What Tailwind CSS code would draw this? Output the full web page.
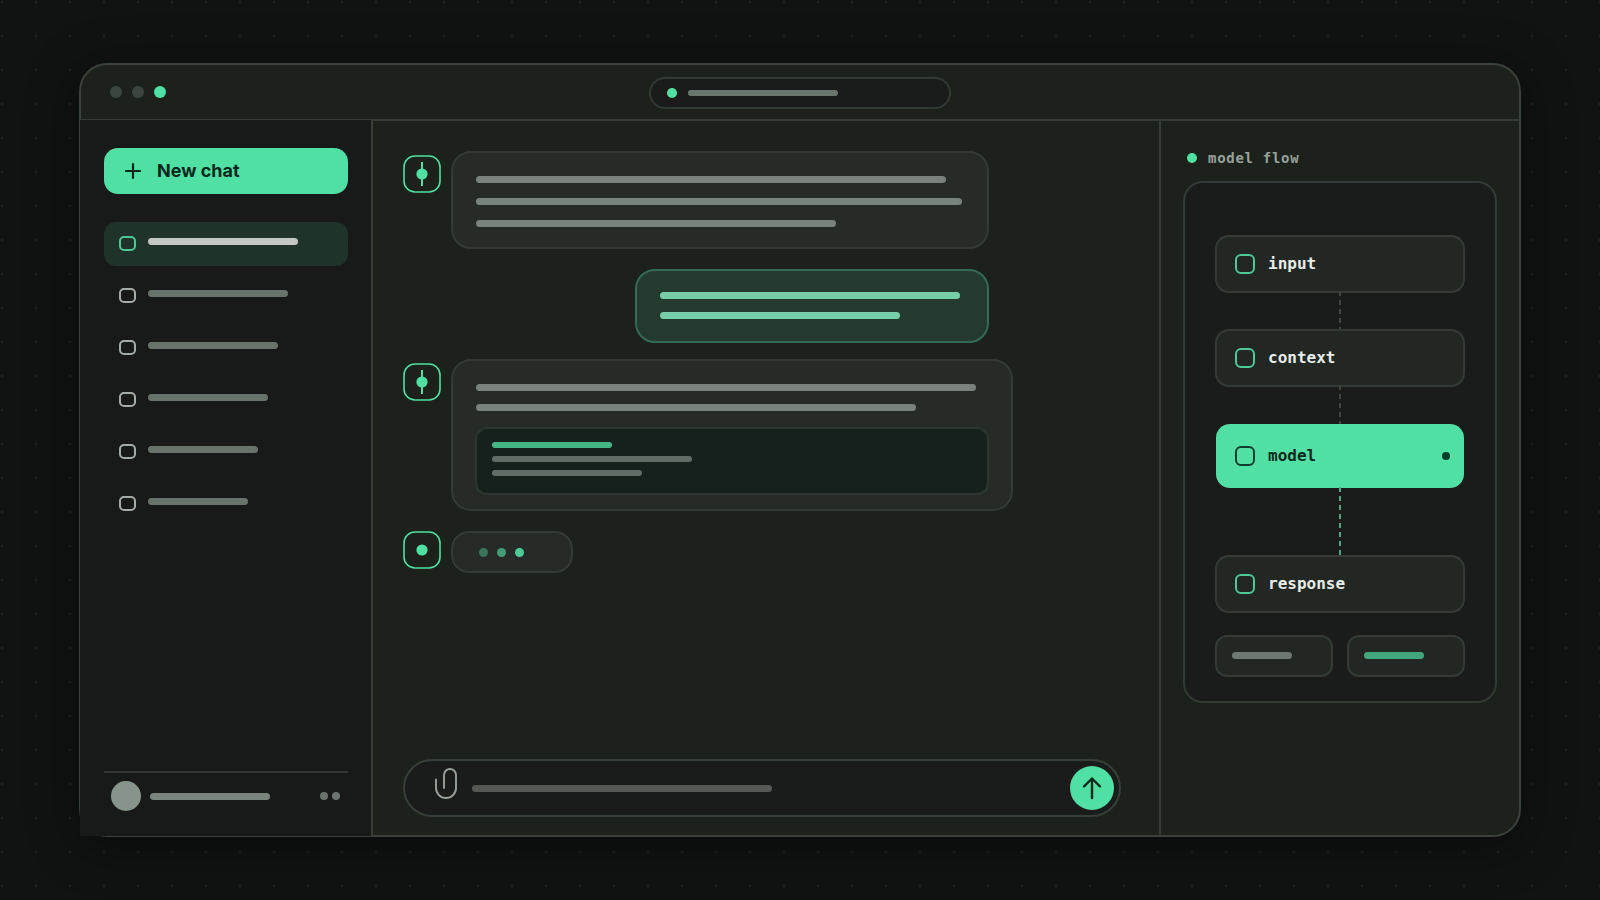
<!DOCTYPE html>
<html lang="en">
<head>
    <meta charset="UTF-8">
    <meta name="viewport" content="width=device-width, initial-scale=1.0">
    <title>Chat</title>
    <script src="https://cdn.jsdelivr.net/npm/@tailwindcss/browser@4"></script>
</head>
<body class="bg-[#111312] bg-[radial-gradient(circle_at_2px_2px,#1d211e_1px,transparent_2px)] bg-size-[34px_34px] font-['Inter',sans-serif]">
    <div class="min-h-screen flex px-[79px] py-[63px]">
        <div class="flex-1 flex flex-col bg-[#1d211c] border-2 border-[#3a413c] rounded-[28px] shadow-[0_8px_48px_4px_rgba(0,0,0,0.4)]">

            <!-- Title bar -->
            <header class="h-14 shrink-0 grid grid-cols-[1fr_302px_1fr] items-center pt-0.5 border-b-2 border-[#363d37]">
                <div class="flex gap-2.5 pl-[29px] pb-0.5">
                    <span class="size-3 rounded-full bg-[#3b4641]"></span>
                    <span class="size-3 rounded-full bg-[#3b4641]"></span>
                    <span class="size-3 rounded-full bg-[#50e0a4]"></span>
                </div>
                <div class="h-8 flex items-center gap-[11px] pl-4 rounded-full bg-[#1a1c1b] border-2 border-[#323a34]">
                    <span class="size-2.5 rounded-full bg-[#50e0a4]"></span>
                    <span class="w-[150px] h-1.5 rounded-full bg-[#6c756e]"></span>
                </div>
            </header>

            <div class="flex-1 flex">
                <!-- Sidebar -->
                <aside class="relative w-[293px] shrink-0 -mt-px -ml-px -mb-px flex flex-col bg-[#181a19] border-r-2 border-[#363d37] pt-7 pl-6 pr-[23px] pb-[25px]">
                    <button class="h-[46px] shrink-0 flex items-center gap-[15px] pl-5 rounded-[14px] bg-[#50e0a4] text-[#06281b] text-lg font-bold">
                        <svg class="size-[18px]" viewBox="0 0 18 18" fill="none" stroke="currentColor" stroke-width="2.2" stroke-linecap="round"><path d="M9 2v14M2 9h14"/></svg>
                        New chat
                    </button>
                    <nav class="mt-7 flex flex-col gap-2">
                        <a href="#" aria-label="Chat 1" class="h-11 flex items-start gap-3 pl-[15px] pt-3.5 rounded-xl bg-[#1f332b]">
                            <span class="w-[17px] h-[15px] rounded-[5px] border-2 border-[#4cc795]"></span>
                            <span class="mt-0.5 w-[150px] h-[7px] rounded-full bg-[#c4c8c4]"></span>
                        </a>
                        <a href="#" aria-label="Chat 2" class="h-11 flex items-start gap-3 pl-[15px] pt-3.5">
                            <span class="w-[17px] h-[15px] rounded-[5px] border-2 border-[#a3aca6]"></span>
                            <span class="mt-0.5 w-[140px] h-[7px] rounded-full bg-[#6a736b]"></span>
                        </a>
                        <a href="#" aria-label="Chat 3" class="h-11 flex items-start gap-3 pl-[15px] pt-3.5">
                            <span class="w-[17px] h-[15px] rounded-[5px] border-2 border-[#a3aca6]"></span>
                            <span class="mt-0.5 w-[130px] h-[7px] rounded-full bg-[#6a736b]"></span>
                        </a>
                        <a href="#" aria-label="Chat 4" class="h-11 flex items-start gap-3 pl-[15px] pt-3.5">
                            <span class="w-[17px] h-[15px] rounded-[5px] border-2 border-[#a3aca6]"></span>
                            <span class="mt-0.5 w-[120px] h-[7px] rounded-full bg-[#6a736b]"></span>
                        </a>
                        <a href="#" aria-label="Chat 5" class="h-11 flex items-start gap-3 pl-[15px] pt-3.5">
                            <span class="w-[17px] h-[15px] rounded-[5px] border-2 border-[#a3aca6]"></span>
                            <span class="mt-0.5 w-[110px] h-[7px] rounded-full bg-[#6a736b]"></span>
                        </a>
                        <a href="#" aria-label="Chat 6" class="h-11 flex items-start gap-3 pl-[15px] pt-3.5">
                            <span class="w-[17px] h-[15px] rounded-[5px] border-2 border-[#a3aca6]"></span>
                            <span class="mt-0.5 w-[100px] h-[7px] rounded-full bg-[#6a736b]"></span>
                        </a>
                    </nav>
                    <div class="mt-auto flex items-center border-t-2 border-[#313733] pt-2 pl-[7px] pr-2">
                        <span class="size-[30px] rounded-full bg-[#87948c]"></span>
                        <span class="ml-[9px] w-[120px] h-[7px] rounded-full bg-[#7a837c]"></span>
                        <button aria-label="Account menu" class="ml-auto flex gap-1">
                            <span class="size-2 rounded-full bg-[#6c736e]"></span>
                            <span class="size-2 rounded-full bg-[#6c736e]"></span>
                        </button>
                    </div>
                </aside>

                <!-- Conversation -->
                <main class="flex-1 flex flex-col pt-[30px] pl-[30px] pr-[38px] pb-[18px]">
                    <div class="flex items-start gap-2.5">
                        <svg class="mt-1 size-[38px] shrink-0" viewBox="0 0 38 38" fill="none" stroke="#50e0a4"><rect x="1" y="1" width="36" height="36" rx="11" stroke-width="1.6"/><path d="M19 7v24" stroke-width="2"/><circle cx="19" cy="19" r="5.6" fill="#50e0a4" stroke="none"/></svg>
                        <div class="w-[538px] h-[98px] flex flex-col gap-[15px] pt-[23px] pl-[23px] rounded-[20px] bg-[#272b28] border-2 border-[#343b36]">
                            <span class="w-[470px] h-[7px] rounded-full bg-[#79827b]"></span>
                            <span class="w-[486px] h-[7px] rounded-full bg-[#79827b]"></span>
                            <span class="w-[360px] h-[7px] rounded-full bg-[#79827b]"></span>
                        </div>
                    </div>

                    <div class="mt-5 w-[586px] flex justify-end">
                        <div class="w-[354px] h-[74px] flex flex-col gap-[13px] pt-[21px] pl-[23px] rounded-[20px] bg-[#243a2f] border-2 border-[#346b54]">
                            <span class="w-[300px] h-[7px] rounded-full bg-[#76cfa9]"></span>
                            <span class="w-[240px] h-[7px] rounded-full bg-[#76cfa9]"></span>
                        </div>
                    </div>

                    <div class="mt-4 flex items-start gap-2.5">
                        <svg class="mt-1 size-[38px] shrink-0" viewBox="0 0 38 38" fill="none" stroke="#50e0a4"><rect x="1" y="1" width="36" height="36" rx="11" stroke-width="1.6"/><path d="M19 7v24" stroke-width="2"/><circle cx="19" cy="19" r="5.6" fill="#50e0a4" stroke="none"/></svg>
                        <div class="w-[562px] h-[152px] flex flex-col gap-[13px] pt-[23px] px-[22px] rounded-[20px] bg-[#272b28] border-2 border-[#343b36]">
                            <span class="ml-px w-[500px] h-[7px] rounded-full bg-[#79827b]"></span>
                            <span class="ml-px w-[440px] h-[7px] rounded-full bg-[#79827b]"></span>
                            <div class="mt-[3px] h-[68px] flex flex-col gap-2 pt-[13px] pl-[15px] rounded-xl bg-[#16201c] border-2 border-[#2c3631]">
                                <span class="w-[120px] h-1.5 rounded-full bg-[#45b686]"></span>
                                <span class="w-[200px] h-1.5 rounded-full bg-[#616c66]"></span>
                                <span class="w-[150px] h-1.5 rounded-full bg-[#616c66]"></span>
                            </div>
                        </div>
                    </div>

                    <div class="mt-5 flex items-start gap-2.5">
                        <svg class="size-[38px] shrink-0" viewBox="0 0 38 38" fill="none" stroke="#50e0a4"><rect x="1" y="1" width="36" height="36" rx="11" stroke-width="1.6"/><circle cx="19" cy="19" r="5.6" fill="#50e0a4" stroke="none"/></svg>
                        <div class="w-[122px] h-[42px] flex items-center gap-[9px] pl-[26px] rounded-[18px] bg-[#272b28] border-2 border-[#343b36]">
                            <span class="size-[9px] rounded-full bg-[#38755a]"></span>
                            <span class="size-[9px] rounded-full bg-[#429d77]"></span>
                            <span class="size-[9px] rounded-full bg-[#4ccc98]"></span>
                        </div>
                    </div>

                    <form class="mt-auto h-[58px] flex items-center pl-[29px] pr-[5px] rounded-full bg-[#1a1c1b] border-2 border-[#363f39]">
                        <button type="button" aria-label="Attach a file" class="pb-2">
                            <svg class="w-6 h-8" viewBox="0 0 24 32" fill="none" stroke="#98a09a" stroke-width="1.9" stroke-linecap="round"><path d="M2 11.500v8.500a10 10 0 0 0 20 0V7a6 6 0 0 0-12 0v13"/></svg>
                        </button>
                        <div class="relative flex-1 ml-3.5">
                            <input type="text" aria-label="Message" class="block w-full h-[37px] text-[#c4c8c4] text-[15px] outline-none">
                            <span class="absolute left-0 top-[15px] w-[300px] h-[7px] rounded-full bg-[#545955]"></span>
                        </div>
                        <button type="button" aria-label="Send" class="size-11 grid place-items-center rounded-full bg-[#50e0a4]">
                            <svg class="size-6" viewBox="0 0 24 24" fill="none" stroke="#06281b" stroke-width="2.400" stroke-linecap="round" stroke-linejoin="round"><path d="M12 22V2.500M4 10.500l8-8 8 8"/></svg>
                        </button>
                    </form>
                </main>

                <!-- Model flow -->
                <aside class="w-[360px] shrink-0 border-l-2 border-[#363d37] px-[22px] pt-[26px] font-['DejaVu_Sans_Mono',monospace]">
                    <h2 class="flex items-center gap-[11px] pl-1 h-[22px] text-sm font-bold tracking-wider text-[#98a39c]">
                        <span class="size-2.5 rounded-full bg-[#50e0a4]"></span>
                        model flow
                    </h2>
                    <div class="mt-3 flex flex-col pt-[52px] px-[30px] pb-6 rounded-[20px] bg-[#1a1c1b] border-2 border-[#333b36] text-base font-bold text-[#e8ece8]">
                        <div class="h-[58px] flex items-center gap-[13px] pl-[18px] rounded-[14px] bg-[#222724] border-2 border-[#343b36]">
                            <span class="size-5 rounded-[6px] border-2 border-[#4fc998]"></span>
                            input
                        </div>
                        <div class="-mt-0.5 h-[38px] w-0.5 self-center bg-[repeating-linear-gradient(to_bottom,#3f4642_0_5px,transparent_5px_9px)]"></div>
                        <div class="h-[58px] flex items-center gap-[13px] pl-[18px] rounded-[14px] bg-[#222724] border-2 border-[#343b36]">
                            <span class="size-5 rounded-[6px] border-2 border-[#4fc998]"></span>
                            context
                        </div>
                        <div class="-mt-0.5 h-[39px] w-0.5 self-center bg-[repeating-linear-gradient(to_bottom,#3f4642_0_5px,transparent_5px_9px)]"></div>
                        <div class="mx-px h-16 flex items-center gap-[13px] pl-[19px] pr-3.5 rounded-[14px] bg-[#50e0a4] text-[#06281b]">
                            <span class="size-5 rounded-[6px] border-2 border-[#0d3d2a]"></span>
                            model
                            <span class="ml-auto size-2 rounded-full bg-[#06402a]"></span>
                        </div>
                        <div class="-mt-px h-[68px] w-0.5 self-center bg-[repeating-linear-gradient(to_bottom,#4fa883_0_5px,transparent_5px_9px)]"></div>
                        <div class="h-[58px] flex items-center gap-[13px] pl-[18px] rounded-[14px] bg-[#222724] border-2 border-[#343b36]">
                            <span class="size-5 rounded-[6px] border-2 border-[#4fc998]"></span>
                            response
                        </div>
                        <div class="mt-[22px] grid grid-cols-2 gap-3.5">
                            <div class="h-[42px] pt-[15px] pl-[15px] rounded-xl bg-[#222724] border-2 border-[#343b36]">
                                <div class="w-[60px] h-[7px] rounded-full bg-[#6f7872]"></div>
                            </div>
                            <div class="h-[42px] pt-[15px] pl-[15px] rounded-xl bg-[#222724] border-2 border-[#343b36]">
                                <div class="w-[60px] h-[7px] rounded-full bg-[#43a77d]"></div>
                            </div>
                        </div>
                    </div>
                </aside>
            </div>
        </div>
    </div>
</body>
</html>
